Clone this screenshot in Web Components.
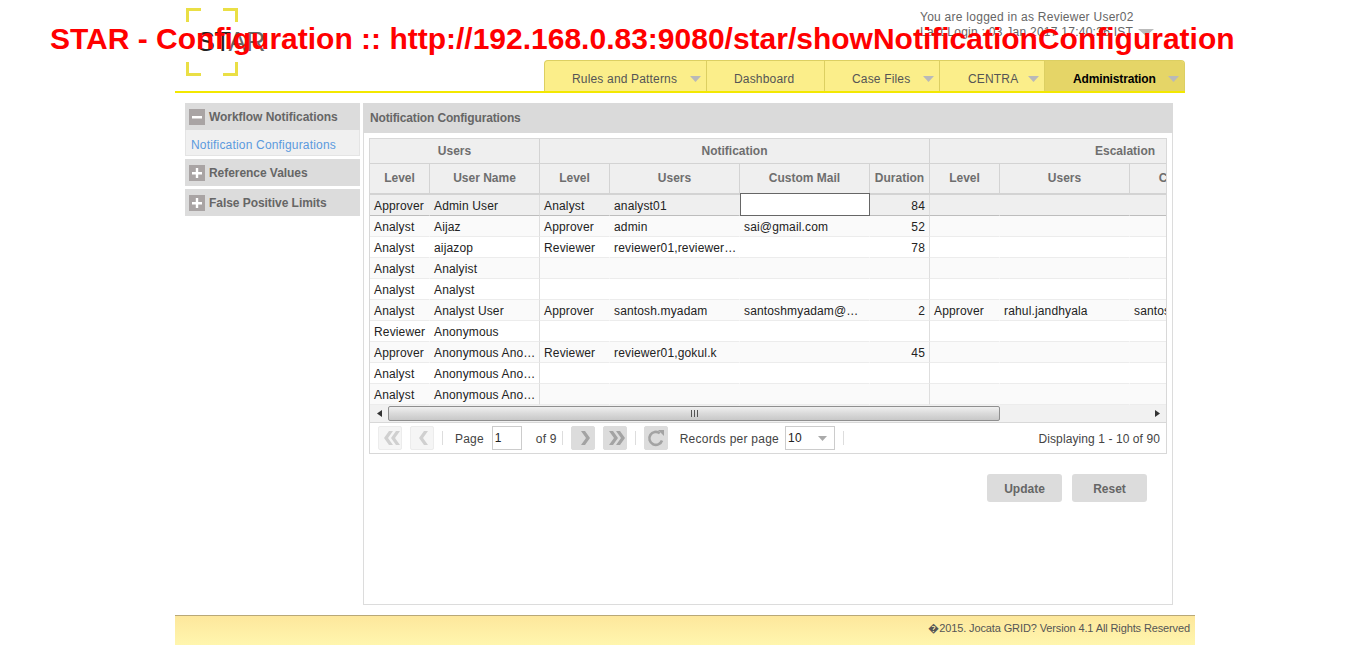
<!DOCTYPE html>
<html>
<head>
<meta charset="utf-8">
<title>STAR</title>
<style>
  html, body { margin: 0; padding: 0; background: #fff; }
  body { font: 12px "Liberation Sans", Arial, sans-serif; color: #555; height: 660px; overflow: hidden; position: relative; }
</style>
</head>
<body>
<star-title>STAR - Configuration :: http://192.168.0.83:9080/star/showNotificationConfiguration</star-title>
<star-page></star-page>

<script>
const caret = c => `<svg width="11" height="6" viewBox="0 0 11 6"><path d="M0 0h11L5.500 6z" fill="${c}"/></svg>`;

class StarTitle extends HTMLElement {
  constructor() {
    super();
    this.attachShadow({mode: 'open'});
    this.shadowRoot.innerHTML = `
      <style>
        :host { position: absolute; left: 50px; top: 21px; z-index: 5; white-space: nowrap;
          font: bold 30px/36px "Liberation Sans", Arial, sans-serif; color: #f00; }
      </style>
      <slot></slot>`;
  }
}

class StarHeader extends HTMLElement {
  constructor() {
    super();
    this.attachShadow({mode: 'open'});
    this.shadowRoot.innerHTML = `
      <style>
        :host { display: flex; justify-content: space-between; width: 1010px; height: 93px; box-sizing: border-box; border-bottom: 2px solid #f3e800; }
        .logo { position: relative; margin: 8px 0 0 11px; width: 52px; height: 68px; flex: none;
          font: 27px/27px "Liberation Sans", Arial, sans-serif; color: #222; }
        .logo svg { display: block; }
        .logo span { position: absolute; left: 11px; top: 21px; letter-spacing: -.5px; white-space: nowrap; }
        .logo i { font-style: normal; color: #666; }
        .right { display: flex; flex-direction: column; align-items: flex-end; justify-content: space-between; }
        .user { margin: 10px 33px 0 0; width: 232px; font-size: 12px; line-height: 15px; letter-spacing: .26px; color: #666; position: relative; height: 40px; white-space: nowrap; }
        .user svg { position: absolute; left: 218px; top: 19px; }
      </style>
      <div class="logo">
        <svg width="52" height="68" viewBox="0 0 52 68" fill="none" stroke="#eadf45" stroke-width="3">
          <path d="M1.500 14V1.500H15M37 1.500H50.500V14M1.500 54V66.500H15M37 66.500H50.500V54"/>
        </svg>
        <span>ST<i>AR</i></span>
      </div>
      <div class="right">
        <div class="user">You are logged in as Reviewer User02<br>Last Login : 03 Jan 2017 17:40:36 IST
          <svg width="16" height="7" viewBox="0 0 16 7"><path d="M0 0h16L8 7z" fill="#bbb"/></svg>
        </div>
        <slot></slot>
      </div>`;
  }
}

class StarNav extends HTMLElement {
  constructor() {
    super();
    this.attachShadow({mode: 'open'});
    this.shadowRoot.innerHTML = `
      <style>
        :host { display: flex; height: 31px; box-sizing: border-box; background: #fbee8a;
          border: 1px solid #dccf62; border-bottom: 0; border-radius: 4px 4px 0 0; overflow: hidden; }
      </style>
      <slot></slot>`;
  }
}

class NavItem extends HTMLElement {
  constructor() {
    super();
    this.attachShadow({mode: 'open'});
    const w = this.getAttribute('width');
    const active = this.hasAttribute('active');
    this.shadowRoot.innerHTML = `
      <style>
        :host { display: flex; align-items: center; box-sizing: border-box; height: 100%; width: ${w}px; padding-left: ${this.getAttribute('pad') || 27}px;
          position: relative; font-size: 12px; color: ${active ? '#000' : '#555'}; font-weight: ${active ? 'bold' : 'normal'};
          letter-spacing: ${active ? '-.15px' : '.17px'}; white-space: nowrap;
          background: ${active ? '#e5d567' : 'none'}; border-right: ${active ? 0 : '1px solid #dccf62'}; }
        .t { position: relative; top: 3px; }
        svg { position: absolute; right: 5px; top: 15px; }
      </style>
      <span class="t"><slot></slot></span>
      ${this.hasAttribute('menu') ? caret('#b9b9b9') : ''}`;
  }
}

class SideGroup extends HTMLElement {
  constructor() {
    super();
    this.attachShadow({mode: 'open'});
    const open = this.hasAttribute('open');
    this.shadowRoot.innerHTML = `
      <style>
        :host { display: block; margin-bottom: 3px; }
        .head { display: flex; align-items: center; gap: 4px; height: 27px; padding-left: 4px; background: #dcdcdc;
          font-weight: bold; font-size: 12px; color: #666; letter-spacing: -.05px; }
        .ico { width: 16px; height: 16px; background: #a9a4a4; display: block; flex: none; }
        .body { background: #f0f0f0; border: 1px solid #e4e4e4; border-top: 0; height: 26px; box-sizing: border-box; padding-left: 5px;
          line-height: 30px; color: #5b9ade; font-size: 12px; letter-spacing: .18px; }
      </style>
      <div class="head">
        <svg class="ico" viewBox="0 0 16 16"><path d="${open ? 'M3 7h10v2.500H3z' : 'M3 7h3.800V3h2.400v4H13v2.400H9.200V13H6.800V9.400H3z'}" fill="#fff"/></svg>
        <span>${this.getAttribute('label')}</span>
      </div>
      ${open ? '<div class="body"><slot></slot></div>' : ''}`;
  }
}

class DataGrid extends HTMLElement {
  constructor() {
    super();
    this.attachShadow({mode: 'open'});
    const cols = [60, 110, 70, 130, 130, 60, 70, 130, 130];
    const rows = [
      ['Approver','Admin User','Analyst','analyst01','__input__','84','','',''],
      ['Analyst','Aijaz','Approver','admin','sai@gmail.com','52','','',''],
      ['Analyst','aijazop','Reviewer','reviewer01,reviewer02,reviewer03','','78','','',''],
      ['Analyst','Analyist','','','','','','',''],
      ['Analyst','Analyst','','','','','','',''],
      ['Analyst','Analyst User','Approver','santosh.myadam','santoshmyadam@jocata.com','2','Approver','rahul.jandhyala','santosh'],
      ['Reviewer','Anonymous','','','','','','',''],
      ['Approver','Anonymous Anonymous','Reviewer','reviewer01,gokul.k','','45','','',''],
      ['Analyst','Anonymous Anonymous','','','','','','',''],
      ['Analyst','Anonymous Anonymous','','','','','','','']
    ];
    const group = new Set([1, 5]);
    const body = rows.map((r, i) => `
      <tr class="${i === 0 ? 'sel' : i % 2 ? 'odd' : 'even'}">
        ${r.map((c, j) => {
          const cls = (group.has(j) ? 'g ' : '') + (j === 5 ? 'num ' : '') + (j === 4 ? 'mail ' : '') + (c === '__input__' ? 'inp' : '');
          return `<td class="${cls}">${c === '__input__' ? '<div class="box"></div>' : c}</td>`;
        }).join('')}
      </tr>`).join('');
    this.shadowRoot.innerHTML = `
      <style>
        :host { display: block; width: 798px; box-sizing: border-box; border: 1px solid #d8d8d8; background: #fff; }
        .view { overflow: hidden; height: 266px; background: #fff; }
        table { border-collapse: separate; border-spacing: 0; table-layout: fixed; width: 890px; font-size: 12px; }
        th { background: #efefef; color: #6e6e6e; font-weight: bold; padding: 0; overflow: hidden; white-space: nowrap; }
        .gh th { height: 25px; border-bottom: 1px solid #d3d3d3; border-right: 1px solid #d3d3d3; box-sizing: border-box; }
        .gh th:last-child { border-right: 0; text-align: left; padding-left: 165px; }
        .ch th { height: 31px; box-sizing: border-box; border-bottom: 2px solid #d3d3d3; border-right: 1px solid #d3d3d3; padding-bottom: 2px; }
        td { height: 21px; box-sizing: border-box; padding: 1px 1px 0 4px; color: #222; border-bottom: 1px solid #ececec; letter-spacing: .15px;
          border-right: 1px solid transparent; white-space: nowrap; overflow: hidden; text-overflow: ellipsis; }
        td.g { border-right: 1px solid #dedede; }
        td.num { text-align: right; padding-right: 4px; }
        td.mail { padding-right: 8px; }
        tr.sel td { background: #efefef; border-bottom: 1px solid #bdbdbd; }
        tr.odd td { background: #fafafa; }
        tr.even td { background: #fff; }
        td.inp { padding: 0; position: relative; overflow: visible; }
        .box { position: absolute; left: 0; top: -2px; right: -1px; bottom: -1px; background: #fff; border: 1px solid #666; z-index: 1; }
      </style>
      <div class="view">
        <table>
          <colgroup>${cols.map(c => `<col style="width:${c}px">`).join('')}</colgroup>
          <tr class="gh"><th colspan="2">Users</th><th colspan="4">Notification</th><th colspan="3">Escalation</th></tr>
          <tr class="ch">
            <th>Level</th><th>User Name</th><th>Level</th><th>Users</th><th>Custom Mail</th><th>Duration</th>
            <th>Level</th><th>Users</th><th>Custom Mail</th>
          </tr>
          ${body}
        </table>
      </div>
      <slot></slot>`;
  }
}

class GridScrollbar extends HTMLElement {
  constructor() {
    super();
    this.attachShadow({mode: 'open'});
    this.shadowRoot.innerHTML = `
      <style>
        :host { display: flex; align-items: center; height: 17px; background: #f1f1f1; border-bottom: 1px solid #d8d8d8; box-sizing: content-box; }
        .arrow { width: 18px; height: 17px; display: flex; align-items: center; justify-content: center; flex: none; }
        .track { flex: 1; height: 15px; display: flex; align-items: stretch; }
        .thumb { width: 612px; box-sizing: border-box; border: 1px solid #8f8f8f; border-radius: 2px;
          background: linear-gradient(#f0f0f0, #dcdcdc 45%, #c8c8c8);
          display: flex; align-items: center; justify-content: center; }
      </style>
      <div class="arrow"><svg width="5" height="7" viewBox="0 0 5 7"><path d="M5 0v7L0 3.500z" fill="#333"/></svg></div>
      <div class="track"><div class="thumb"><svg width="7" height="7" viewBox="0 0 7 7"><path d="M.5 0v7M3.500 0v7M6.500 0v7" stroke="#555"/></svg></div></div>
      <div class="arrow"><svg width="5" height="7" viewBox="0 0 5 7"><path d="M0 0v7l5-3.500z" fill="#333"/></svg></div>`;
  }
}

class PageBtn extends HTMLElement {
  constructor() {
    super();
    this.attachShadow({mode: 'open'});
    const off = this.hasAttribute('disabled');
    const icons = {
      first: 'M9 3 4 10l5 7h4L8 10l5-7zM16 3l-5 7 5 7h4l-5-7 5-7z',
      prev: 'M12 3 7 10l5 7h4l-5-7 5-7z',
      next: 'M8 3l5 7-5 7h4l5-7-5-7z',
      last: 'M4 3l5 7-5 7h4l5-7-5-7zM11 3l5 7-5 7h4l5-7-5-7z'
    };
    const kind = this.getAttribute('kind');
    const art = kind === 'refresh'
      ? `<path d="M16 12.500A6.500 6.500 0 1 1 13.800 5.200" fill="none" stroke="#a3a3a3" stroke-width="2.600"/><path d="M12 2h6v6z" fill="#a3a3a3"/>`
      : `<path d="${icons[kind]}" fill="${off ? '#d0d0d0' : '#a3a3a3'}"/>`;
    this.shadowRoot.innerHTML = `
      <style>
        :host { display: flex; align-items: center; justify-content: center; flex: none; width: 24px; height: 24px; box-sizing: border-box;
          border-radius: 2px; background: ${off ? '#f5f5f5' : '#dcdcdc'}; border: 1px solid ${off ? '#ececec' : '#dcdcdc'}; }
      </style>
      <svg width="20" height="20" viewBox="0 0 20 20">${art}</svg>`;
  }
}

class GridPager extends HTMLElement {
  constructor() {
    super();
    this.attachShadow({mode: 'open'});
    this.shadowRoot.innerHTML = `
      <style>
        :host { display: flex; align-items: center; height: 30px; padding: 0 6px 0 8px; font-size: 12px; color: #444; letter-spacing: .2px; }
        span { padding-top: 2px; }
        .sep { width: 1px; height: 14px; padding: 0; background: #ddd; flex: none; }
        .box { height: 24px; box-sizing: border-box; border: 1px solid #ccc; background: #fff; color: #222;
          padding: 0 2px; line-height: 23px; flex: none; position: relative; }
        .box svg { position: absolute; right: 7px; top: 9px; }
        .end { margin-left: auto; letter-spacing: .09px; }
      </style>
      <page-btn kind="first" disabled></page-btn>
      <page-btn kind="prev" disabled style="margin-left:8px"></page-btn>
      <span class="sep" style="margin-left:8px"></span>
      <span style="margin-left:12px">Page</span>
      <span class="box" style="width:30px;margin-left:8px">1</span>
      <span style="margin-left:14px">of 9</span>
      <span class="sep" style="margin-left:5px"></span>
      <page-btn kind="next" style="margin-left:8px"></page-btn>
      <page-btn kind="last" style="margin-left:8px"></page-btn>
      <span class="sep" style="margin-left:8px"></span>
      <page-btn kind="refresh" style="margin-left:8px"></page-btn>
      <span style="margin-left:12px;letter-spacing:.25px">Records per page</span>
      <span class="box" style="width:50px;margin-left:6px">10${caret('#aaa').replace('width="11" height="6"', 'width="9" height="5"')}</span>
      <span class="sep" style="margin-left:8px"></span>
      <span class="end">Displaying 1 - 10 of 90</span>`;
  }
}

class StarButton extends HTMLElement {
  constructor() {
    super();
    this.attachShadow({mode: 'open'});
    this.shadowRoot.innerHTML = `
      <style>
        :host { display: flex; align-items: center; justify-content: center; box-sizing: border-box; padding-top: 2px; width: 75px; height: 28px; border-radius: 3px;
          background: #dcdcdc; color: #666; font-weight: bold; font-size: 12px; }
      </style>
      <slot></slot>`;
  }
}

class StarPage extends HTMLElement {
  constructor() {
    super();
    this.attachShadow({mode: 'open'});
    this.shadowRoot.innerHTML = `
      <style>
        :host { display: block; margin-left: 175px; width: 1020px; }
        .cols { display: flex; align-items: flex-start; gap: 3px; margin: 10px 0 0 10px; }
        .side { width: 175px; flex: none; }
        .panel { width: 810px; height: 502px; box-sizing: border-box; border: 1px solid #dcdcdc; border-top: 0; }
        .title { height: 30px; margin: 0 -1px; padding-left: 7px; background: #dadada; font-weight: bold; color: #666; line-height: 30px; letter-spacing: -.15px; }
        .wrap { margin: 5px 0 0 5px; }
        .btns { display: flex; justify-content: flex-end; gap: 10px; margin: 20px 25px 0 0; }
        .foot { margin-top: 10px; height: 30px; box-sizing: border-box; border-top: 1px solid #b8a878; text-align: right; padding-right: 5px;
          background: linear-gradient(#fde79c, #fff6ae); color: #555; font-size: 11px; line-height: 25px; letter-spacing: -.12px; }
      </style>
      <star-header>
        <star-nav>
          <nav-item width="162" menu>Rules and Patterns</nav-item>
          <nav-item width="118">Dashboard</nav-item>
          <nav-item width="115" menu>Case Files</nav-item>
          <nav-item width="105" menu pad="28">CENTRA</nav-item>
          <nav-item width="139" menu active pad="28">Administration</nav-item>
        </star-nav>
      </star-header>
      <div class="cols">
        <div class="side">
          <side-group label="Workflow Notifications" open>Notification Configurations</side-group>
          <side-group label="Reference Values"></side-group>
          <side-group label="False Positive Limits"></side-group>
        </div>
        <div class="panel">
          <div class="title">Notification Configurations</div>
          <div class="wrap">
            <data-grid>
              <grid-scrollbar></grid-scrollbar>
              <grid-pager></grid-pager>
            </data-grid>
            <div class="btns">
              <star-button>Update</star-button>
              <star-button>Reset</star-button>
            </div>
          </div>
        </div>
      </div>
      <div class="foot">\uFFFD2015. Jocata GRID? Version 4.1 All Rights Reserved</div>`;
  }
}

customElements.define('star-title', StarTitle);
customElements.define('star-header', StarHeader);
customElements.define('star-nav', StarNav);
customElements.define('nav-item', NavItem);
customElements.define('side-group', SideGroup);
customElements.define('page-btn', PageBtn);
customElements.define('grid-pager', GridPager);
customElements.define('grid-scrollbar', GridScrollbar);
customElements.define('data-grid', DataGrid);
customElements.define('star-button', StarButton);
customElements.define('star-page', StarPage);
</script>
</body>
</html>
